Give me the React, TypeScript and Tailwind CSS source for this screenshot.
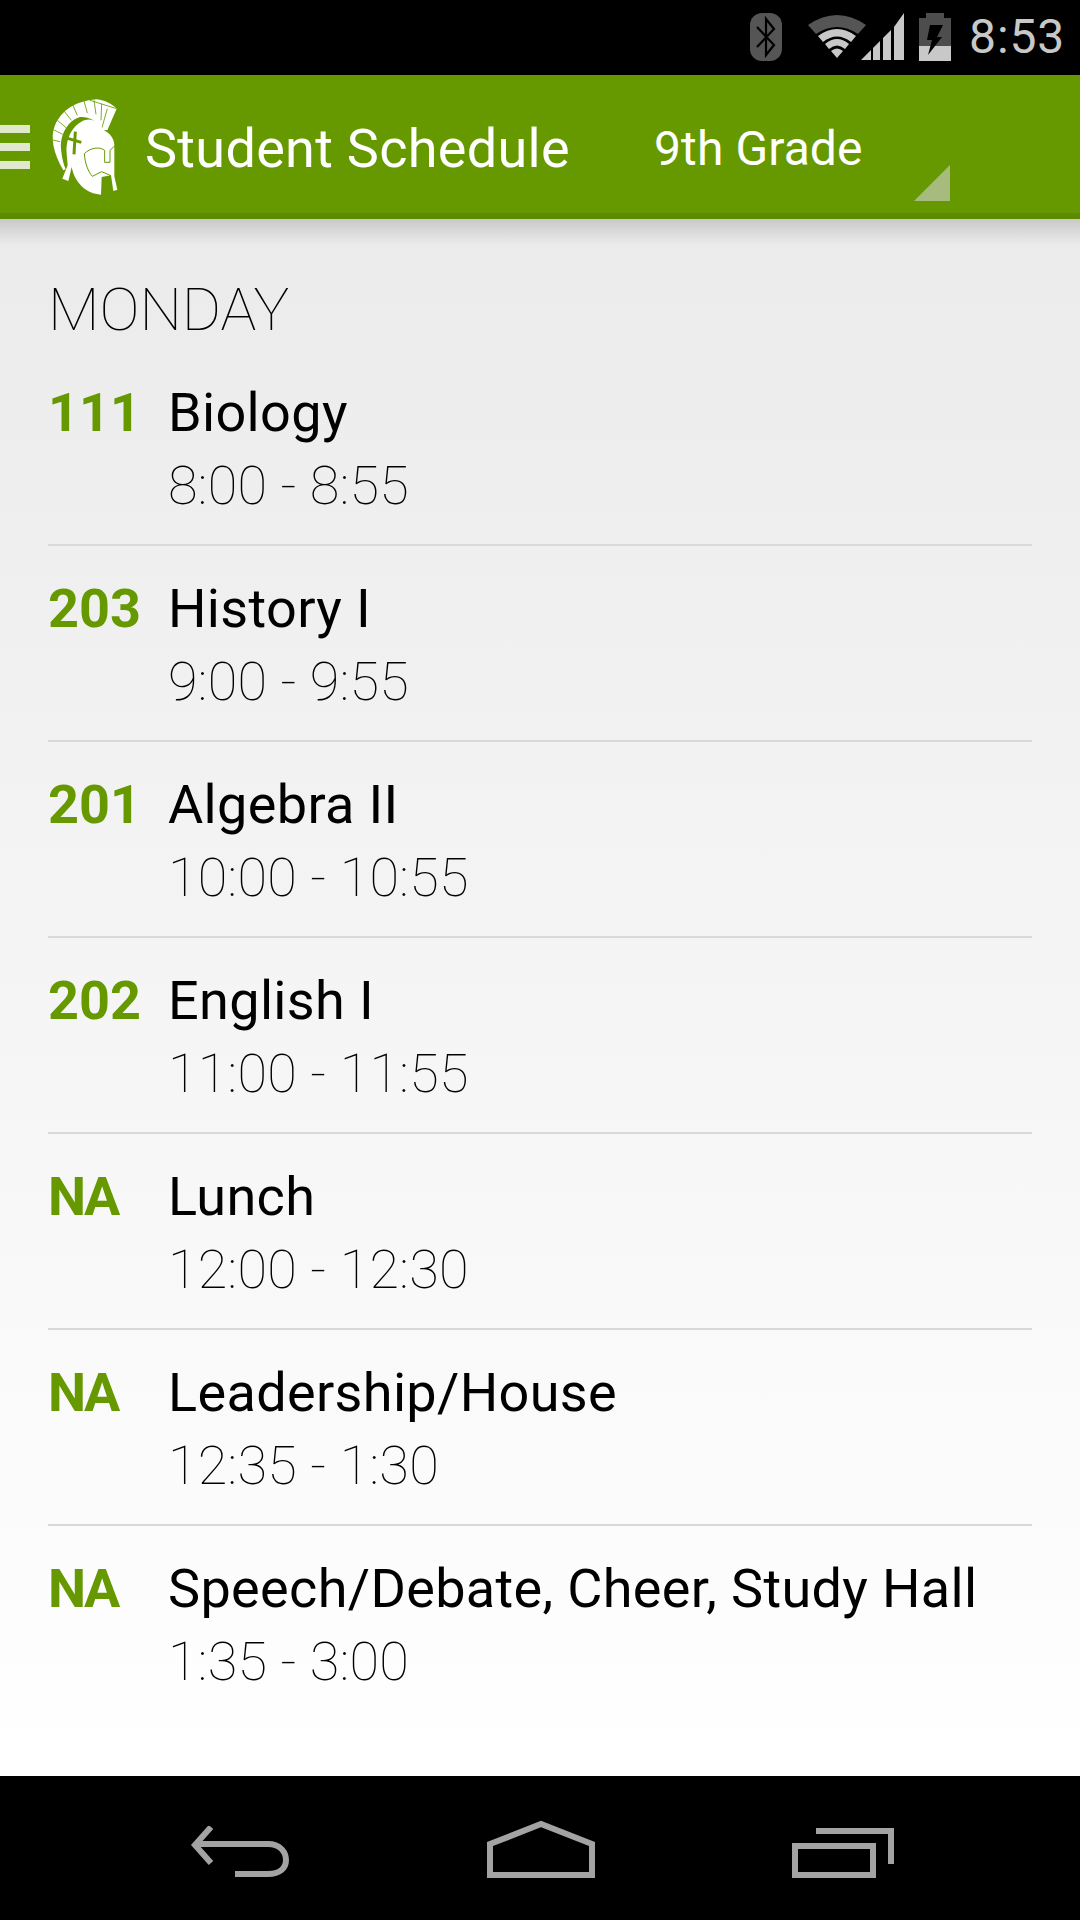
import * as React from "react";

const periods = [
  { room: "111", name: "Biology", time: "8:00 - 8:55" },
  { room: "203", name: "History I", time: "9:00 - 9:55" },
  { room: "201", name: "Algebra II", time: "10:00 - 10:55" },
  { room: "202", name: "English I", time: "11:00 - 11:55" },
  { room: "NA", name: "Lunch", time: "12:00 - 12:30" },
  { room: "NA", name: "Leadership/House", time: "12:35 - 1:30" },
  { room: "NA", name: "Speech/Debate, Cheer, Study Hall", time: "1:35 - 3:00" },
];

const StatusBar = () => (
  <div className="h-[75px] shrink-0 bg-black flex items-start pl-[750px] pt-[13px]">
    {/* bluetooth */}
    <svg width="32" height="48" viewBox="0 0 32 48">
      <rect x="0" y="0" width="32" height="48" rx="12" fill="#555555" />
      <path d="M7 14 L24 32 L16 42 L16 6 L24 16 L7 34" fill="none" stroke="#000" strokeWidth="2.2" />
    </svg>
    {/* wifi + signal */}
    <svg className="ml-[26px]" width="96" height="48" viewBox="0 0 96 48">
      <path d="M0 12 Q29 -8 58 12 L50 21 Q29 7 8 21 Z" fill="#555555" />
      <path d="M10 23 Q29 9 48 23 L43 29 Q29 18 15 29 Z" fill="#c8c8c8" />
      <path d="M17 31 Q29 21 41 31 L37 36 Q29 29 21 36 Z" fill="#c8c8c8" />
      <path d="M23 38 Q29 33 35 38 L29 45 Z" fill="#c8c8c8" />
      <path d="M53 47 L63 37 L63 47 Z" fill="#c8c8c8" />
      <path d="M65 35 L72 28 L72 47 L65 47 Z" fill="#c8c8c8" />
      <path d="M75 25 L83 17 L83 47 L75 47 Z" fill="#c8c8c8" />
      <path d="M86 14 L96 0 L96 47 L86 47 Z" fill="#c8c8c8" />
    </svg>
    {/* battery */}
    <svg className="ml-[15px]" width="32" height="48" viewBox="0 0 32 48">
      <path d="M7 0 H25 V5 H32 V33 H0 V5 H7 Z" fill="#4d4d4d" />
      <rect x="0" y="33" width="32" height="15" fill="#c8c8c8" />
      <path d="M11 12 H24 L18 24 H23 L9 42 L13 27 H8 Z" fill="#000" />
    </svg>
    <span className="ml-[18px] text-[48px] leading-[48px] font-normal tracking-[0.9px] text-[#c8c8c8]">8:53</span>
  </div>
);

const Logo = () => (
  <svg width="70" height="100" viewBox="150 80 210 300" className="ml-[20px] shrink-0">
    {/* plume */}
    <path
      d="M190 300 C160 250 150 200 165 165 C185 120 225 92 290 87 C315 90 335 100 350 115 L322 180 L305 178 C290 150 265 138 240 140 C205 150 180 190 183 235 C185 260 190 280 197 297 Z"
      fill="#fff"
    />
    <g stroke="#669900" strokeWidth="2.5" fill="none">
      <path d="M155 208 L180 214 M160 178 L188 192 M172 150 L198 172 M192 122 L214 150 M218 103 L232 135 M252 92 L262 128 M282 90 L288 132 M305 100 L303 150 M270 90 L350 115 M322 115 L305 175" />
    </g>
    {/* helmet */}
    <path
      d="M200 250 C195 185 240 145 270 148 C295 150 305 170 315 182 C335 190 345 215 343 228 L343 318 L352 358 L340 362 L333 315 L305 320 L303 373 C260 370 225 340 215 290 L205 332 L187 325 L203 285 Z"
      fill="#fff"
    />
    <path d="M253 250 C270 232 300 228 314 240 L314 276 L330 276 L330 240 L345 226 M253 250 C255 280 265 305 277 318 L305 304 L333 316" fill="none" stroke="#669900" strokeWidth="3" />
    <path d="M226 184 L222 252 M203 204 L244 216" fill="none" stroke="#669900" strokeWidth="9" />
  </svg>
);

const Header = () => (
  <div className="h-[144px] shrink-0 bg-[#669900] border-b-[6px] border-[#5c8a00] pt-[5px] flex items-center relative">
    <div className="w-[30px] shrink-0 flex flex-col gap-[10px]">
      <div className="h-[8px] bg-[#e0e9cc]" />
      <div className="h-[8px] bg-[#e0e9cc]" />
      <div className="h-[8px] bg-[#e0e9cc]" />
    </div>
    <Logo />
    <span className="ml-[25px] mt-[4px] w-[509px] text-[54px] tracking-[0.3px] text-white whitespace-nowrap">Student Schedule</span>
    <span className="mt-[4px] text-[48px] tracking-[0.1px] text-white whitespace-nowrap">9th Grade</span>
    <svg className="absolute left-[914px] top-[90px]" width="36" height="36" viewBox="0 0 36 36">
      <path d="M0 36 L36 0 L36 36 Z" fill="#a8bb7f" />
    </svg>
  </div>
);

const Row = ({ room, name, time, last }: { room: string; name: string; time: string; last: boolean }) => (
  <div className={last ? "h-[196px] pt-[26px] flex" : "h-[196px] pt-[26px] flex border-b-2 border-[#d9d9d9]"}>
    <div className={room === "NA" ? "w-[120px] shrink-0 text-[54px] leading-[73px] font-bold tracking-[-2.5px] text-[#669900]" : "w-[120px] shrink-0 text-[54px] leading-[73px] font-bold text-[#669900]"}>
      {room}
    </div>
    <div className="whitespace-nowrap">
      <div className="text-[54px] leading-[73px] tracking-[0.35px] text-black">{name}</div>
      <div className="text-[54px] leading-[73px] font-thin tracking-[0.25px] text-black">{time}</div>
    </div>
  </div>
);

const NavBar = () => (
  <div className="h-[144px] shrink-0 bg-black flex items-end justify-between pl-[190px] pr-[186px] pb-[42px]">
    <svg width="100" height="52" viewBox="0 0 100 52">
      <path
        d="M21 1 L5 19 L21 37 M5 18 H78 C90 18 96 26 96 34 C96 42 90 48 78 48 H45"
        fill="none"
        stroke="#a3a3a3"
        strokeWidth="6"
      />
    </svg>
    <svg width="108" height="58" viewBox="0 0 108 58">
      <path d="M3 55 V24 L54 4 L105 24 V55 Z" fill="none" stroke="#a3a3a3" strokeWidth="6" />
    </svg>
    <svg width="102" height="50" viewBox="0 0 102 50">
      <path d="M3 18 H81 V47 H3 Z M24 3 H99 V36" fill="none" stroke="#a3a3a3" strokeWidth="6" />
    </svg>
  </div>
);

export default function App() {
  return (
    <div className="w-[1080px] h-[1920px] flex flex-col font-['Roboto',sans-serif]">
      <StatusBar />
      <Header />
      <div className="relative flex-1 bg-linear-to-b from-[#ebebeb] to-white px-[48px] pt-[51px]">
        <div className="absolute left-0 right-0 top-0 h-[26px] bg-linear-to-b from-[#c9c9c9] to-transparent" />
        <div className="text-[60px] leading-[80px] font-thin text-black">MONDAY</div>
        {periods.map((p, i) => (
          <Row key={p.name} room={p.room} name={p.name} time={p.time} last={i === periods.length - 1} />
        ))}
      </div>
      <NavBar />
    </div>
  );
}
